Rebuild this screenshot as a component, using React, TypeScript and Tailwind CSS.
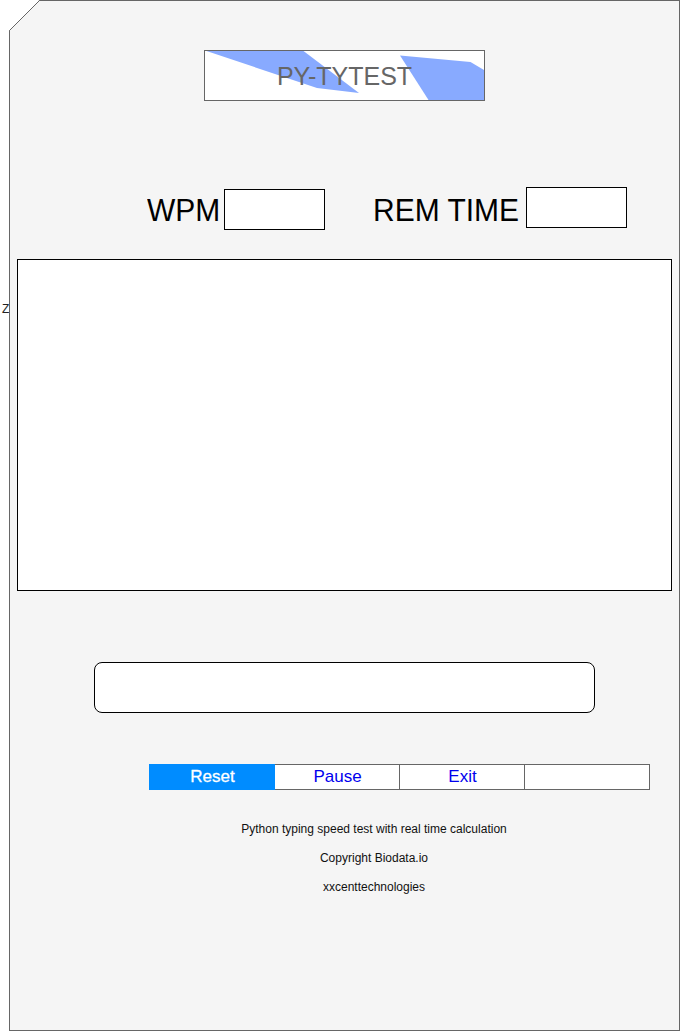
const menu = ["Reset", "Pause", "Exit", ""];

function Header() {
  return (
    <div className="relative mt-[49px] ml-[194px] flex h-[51px] w-[281px] items-center justify-center border border-[#666] bg-white">
      <svg className="absolute inset-0" width="279" height="49" viewBox="0 0 279 49">
        <path d="M0 -0.5L98.5 0L154 42L112 37Z" fill="#88aaff" />
        <path d="M195 4.5L265.5 11L279 19V49H223.5Z" fill="#88aaff" />
      </svg>
      <span className="relative text-[25px] leading-[30px] text-[#666]">PY-TYTEST</span>
    </div>
  );
}

export default function App() {
  return (
    <div className="flex h-[1032px] w-[680px] overflow-hidden bg-white font-['Liberation_Sans',Arial,sans-serif] text-black">
      <div className="w-[9px] shrink-0 pt-[302px] pl-[2px] text-[12px] leading-[14px] text-[#222]">Z</div>
      <div className="relative flex h-[1031px] w-[671px] shrink-0 flex-col border border-[#666] bg-[#f5f5f5]">
        <svg className="absolute -top-px -left-px" width="31" height="31" viewBox="0 0 31 31">
          <path d="M0 0H30.5L0.5 30.5H0Z" fill="white" />
          <path d="M0.5 31V30.5L30.5 0.5H31" stroke="#666" fill="none" />
        </svg>
        <Header />
        <div className="mt-[86px] flex h-[43px]">
          <span className="mt-[6px] ml-[137px] h-[36px] w-[77px] origin-[50%_80%] scale-y-105 text-[30px] leading-[36px]">WPM</span>
          <div className="mt-[2px] h-[41px] w-[101px] border border-black bg-white" />
          <span className="mt-[6px] ml-[48px] h-[36px] w-[153px] origin-[50%_80%] scale-y-105 whitespace-nowrap text-[30px] leading-[36px]">REM TIME</span>
          <div className="h-[41px] w-[101px] border border-black bg-white" />
        </div>
        <div className="mt-[29px] ml-[7px] h-[332px] w-[655px] border border-black bg-white" />
        <div className="mt-[71px] ml-[84px] h-[51px] w-[501px] rounded-[8px] border border-black bg-white" />
        <div className="mt-[51px] ml-[139px] flex h-[26px] w-[501px]">
          {menu.map((label, i) => (
            <div
              key={i}
              className={
                i === 0
                  ? "flex w-[126px] items-center justify-center bg-[#008cff] pl-px text-[17px] leading-[20px] text-white [-webkit-text-stroke:0.3px_white]"
                  : "flex w-[125px] items-center justify-center border-y border-r border-[#666] bg-white pl-px text-[17px] leading-[20px] text-[#0000ee]"
              }
            >
              {label}
            </div>
          ))}
        </div>
        <div className="mt-[32px] ml-[214px] flex w-[300px] flex-col items-center gap-[15px] text-[12px] leading-[14px] text-[#111]">
          <p>Python typing speed test with real time calculation</p>
          <p>Copyright Biodata.io</p>
          <p>xxcenttechnologies</p>
        </div>
      </div>
    </div>
  );
}
